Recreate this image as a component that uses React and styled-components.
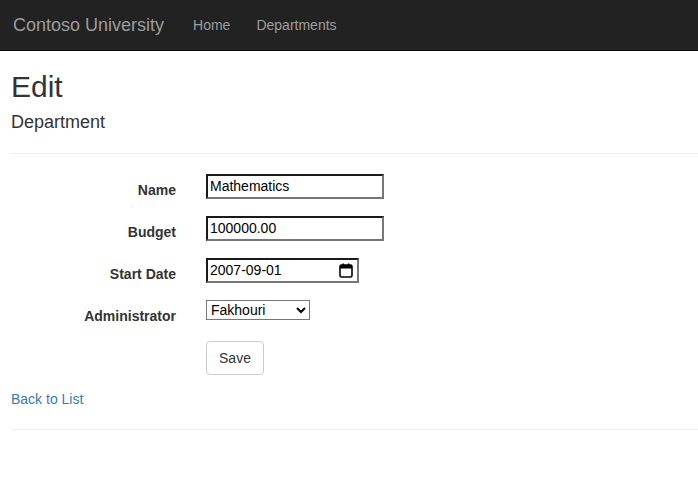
import React from "react";
import styled, { createGlobalStyle } from "styled-components";

const Global = createGlobalStyle`
  body {
    margin: 0;
    font-family: "Liberation Sans", Arial, sans-serif;
    font-size: 14px;
    line-height: 1.42857;
    color: #333;
    background: #fff;
  }
`;

const Navbar = styled.nav`
  height: 51px;
  background: #222;
  border-bottom: 1px solid #080808;
  box-sizing: border-box;
  display: flex;
  align-items: flex-start;
  padding: 15px 0 0 13px;
  line-height: 20px;
`;

const Brand = styled.a`
  font-size: 18px;
  color: #9d9d9d;
  text-decoration: none;
  margin-right: 29px;
`;

const NavLink = styled.a`
  color: #9d9d9d;
  text-decoration: none;
  margin-right: 26px;
`;

const Content = styled.main`
  padding-left: 11px;
`;

const Title = styled.h2`
  font-size: 30px;
  font-weight: 500;
  line-height: 1.1;
  margin: 19px 0 10px;
`;

const Subtitle = styled.h4`
  font-size: 18px;
  font-weight: 500;
  line-height: 1.1;
  margin: 10px 0 10px;
`;

const Rule = styled.hr`
  border: 0;
  border-top: 1px solid #eee;
  margin: ${({ $top }) => $top}px 0 20px;
`;

const Form = styled.form`
  display: grid;
  grid-template-columns: 165px auto;
  column-gap: 30px;
  row-gap: 15px;
  align-items: start;
`;

const Label = styled.label`
  font-weight: bold;
  text-align: right;
  padding-top: 7px;
  height: 27px;
  box-sizing: border-box;
`;

const Field = styled.div`
  position: relative;
  display: flex;
  width: fit-content;
  margin-top: ${({ $shift = 0 }) => $shift}px;
`;

const TextInput = styled.input`
  font-family: "Liberation Sans", Arial, sans-serif;
  font-size: 14px;
  width: ${({ $w }) => $w}px;
  height: 25px;
  box-sizing: border-box;
  padding: 1px 2px;
  border: 2px solid;
  border-color: #1a1a1a #767676 #767676 #1a1a1a;
  color: #000;
`;

const CalendarIcon = styled.svg`
  position: absolute;
  right: 6px;
  top: 5px;
  width: 14px;
  height: 15px;
  pointer-events: none;
`;

const Select = styled.select`
  font-family: "Liberation Sans", Arial, sans-serif;
  font-size: 14px;
  width: 104px;
  height: 20px;
  border: 1px solid #767676;
  border-radius: 0;
  color: #000;
  background: #fff;
`;

const Button = styled.button`
  font-family: "Liberation Sans", Arial, sans-serif;
  font-size: 14px;
  color: #333;
  background: #fff;
  border: 1px solid #ccc;
  border-radius: 4px;
  padding: 6px 12px;
  height: 34px;
  width: 58px;
`;

const BackLink = styled.a`
  display: block;
  color: #337ab7;
  text-decoration: none;
  margin-top: 15px;
`;

export default function App() {
  return (
    <>
      <Global />
      <Navbar>
        <Brand href="#">Contoso University</Brand>
        <NavLink href="#">Home</NavLink>
        <NavLink href="#">Departments</NavLink>
      </Navbar>
      <Content>
        <Title>Edit</Title>
        <Subtitle>Department</Subtitle>
        <Rule $top={20} />
        <Form>
          <Label>Name</Label>
          <Field>
            <TextInput $w={178} defaultValue="Mathematics" />
          </Field>
          <Label>Budget</Label>
          <Field>
            <TextInput $w={178} defaultValue="100000.00" />
          </Field>
          <Label>Start Date</Label>
          <Field>
            <TextInput $w={153} defaultValue="2007-09-01" />
            <CalendarIcon viewBox="0 0 14 15">
              <rect x="1" y="2" width="12" height="12" rx="1.5" fill="none" stroke="#000" strokeWidth="1.6" />
              <rect x="1" y="2" width="12" height="3.5" fill="#000" />
              <rect x="3.5" y="0.5" width="1.6" height="2.5" fill="#000" />
              <rect x="8.9" y="0.5" width="1.6" height="2.5" fill="#000" />
            </CalendarIcon>
          </Field>
          <Label>Administrator</Label>
          <Field>
            <Select defaultValue="3">
              <option value="1">Abercrombie</option>
              <option value="2">Zheng</option>
              <option value="3">Fakhouri</option>
              <option value="4">Kapoor</option>
            </Select>
          </Field>
          <span />
          <Field $shift={-1}>
            <Button type="button">Save</Button>
          </Field>
        </Form>
        <BackLink href="#">Back to List</BackLink>
        <Rule $top={19} />
      </Content>
    </>
  );
}
